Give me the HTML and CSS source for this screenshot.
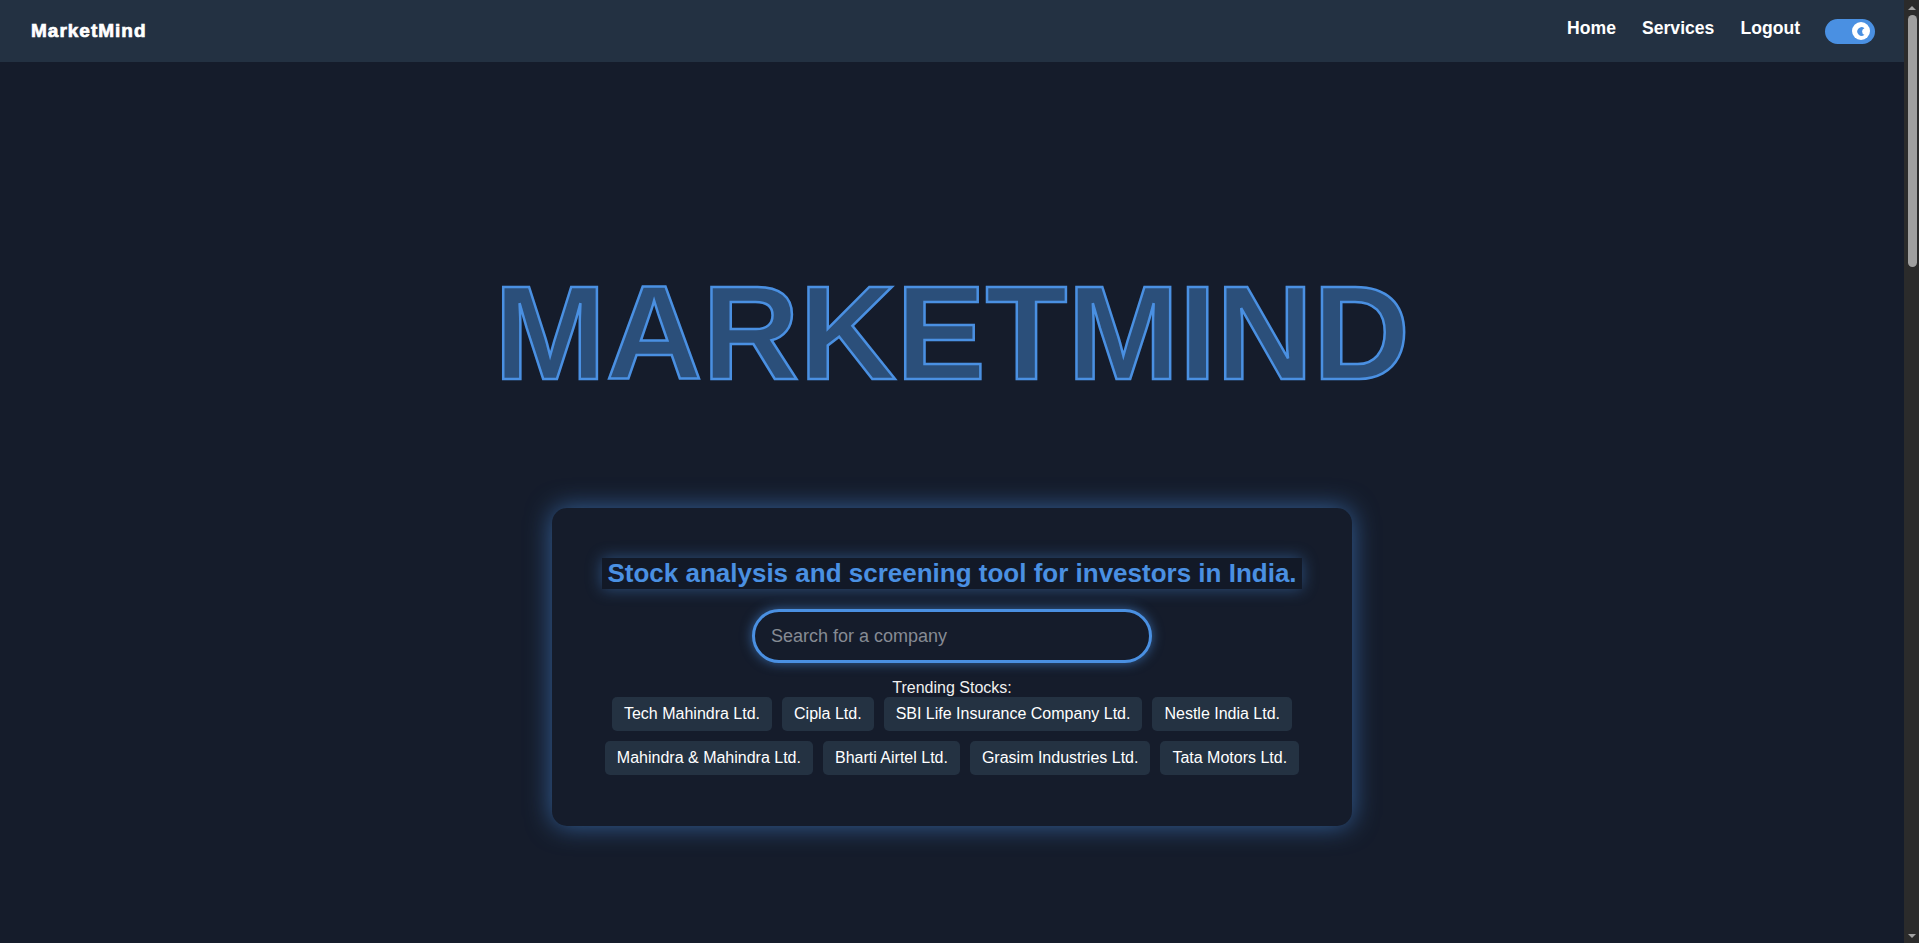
FILE: index.html
```html
<!DOCTYPE html>
<html lang="en">
<head>
<meta charset="utf-8">
<title>MarketMind</title>
<link rel="stylesheet" href="styles.css">
</head>
<body>
<div class="page">
  <header class="topbar">
    <a class="brand" href="#">MarketMind</a>
    <nav class="nav">
      <a class="nav-link" href="#">Home</a>
      <a class="nav-link" href="#">Services</a>
      <a class="nav-link" href="#">Logout</a>
      <span class="switch" role="switch" aria-checked="true">
        <span class="knob">
          <svg class="moon" viewBox="0 0 12 12" width="13" height="13" aria-hidden="true">
            <path d="M8.7 2.9 A4 4 0 1 0 8.7 9.1 A3.3 3.3 0 0 1 8.7 2.9 Z" fill="#4a90e2"/>
          </svg>
        </span>
      </span>
    </nav>
  </header>

  <main class="hero">
    <h1 class="title">MARKETMIND</h1>

    <section class="card">
      <h2 class="tagline"><span class="tagline-text">Stock analysis and screening tool for investors in India.</span></h2>
      <form class="search">
        <input class="search-input" type="text" placeholder="Search for a company">
      </form>
      <p class="trend-label">Trending Stocks:</p>
      <div class="chips">
        <a class="chip" href="#">Tech Mahindra Ltd.</a>
        <a class="chip" href="#">Cipla Ltd.</a>
        <a class="chip" href="#">SBI Life Insurance Company Ltd.</a>
        <a class="chip" href="#">Nestle India Ltd.</a>
        <a class="chip" href="#">Mahindra &amp; Mahindra Ltd.</a>
        <a class="chip" href="#">Bharti Airtel Ltd.</a>
        <a class="chip" href="#">Grasim Industries Ltd.</a>
        <a class="chip" href="#">Tata Motors Ltd.</a>
      </div>
    </section>
  </main>

  <section class="below"></section>
</div>
<div class="scrollbar" aria-hidden="true">
  <span class="sb-arrow sb-up"></span>
  <span class="sb-track"><span class="sb-thumb"></span></span>
  <span class="sb-arrow sb-down"></span>
</div>
</body>
</html>
```

FILE: styles.css
```css
* {
  box-sizing: border-box;
}

html, body {
  margin: 0;
  padding: 0;
  height: 100%;
  overflow: hidden;
}

body {
  background: #151c2b;
  color: #ffffff;
  font-family: "Liberation Sans", Arial, sans-serif;
  display: flex;
}

.page {
  flex: 1;
  min-width: 0;
  height: 100vh;
  overflow: hidden;
  background: #151c2b;
}

a {
  color: inherit;
  text-decoration: none;
}

/* scrollbar rail */
.scrollbar {
  width: 15px;
  height: 100vh;
  background: #2b2b2b;
  display: flex;
  flex-direction: column;
  align-items: center;
}

.sb-arrow {
  width: 15px;
  height: 15px;
  display: flex;
  align-items: center;
  justify-content: center;
}

.sb-up::before,
.sb-down::before {
  content: "";
  width: 0;
  height: 0;
  border-left: 4px solid transparent;
  border-right: 4px solid transparent;
}

.sb-up::before {
  border-bottom: 4px solid #a3a3a3;
}

.sb-down::before {
  border-top: 4px solid #a3a3a3;
}

.sb-track {
  flex: 1;
  width: 15px;
  display: flex;
  justify-content: center;
  padding-left: 1px;
}

.sb-thumb {
  width: 9px;
  height: 252px;
  border-radius: 5px;
  background: #9f9f9f;
}

/* header */
.topbar {
  height: 62px;
  background: #233142;
  display: flex;
  align-items: center;
  justify-content: space-between;
  padding: 0 29px 0 31px;
}

.brand {
  font-size: 19px;
  font-weight: 900;
  letter-spacing: 1px;
  -webkit-text-stroke: 0.7px #ffffff;
  color: #ffffff;
}

.nav {
  display: flex;
  align-items: center;
  gap: 26px;
}

.nav-link {
  font-size: 17.6px;
  font-weight: 700;
  color: #ffffff;
  margin-bottom: 5px;
}

.switch {
  width: 50px;
  height: 25px;
  margin-left: -1px;
  border-radius: 13px;
  background: #4a90e2;
  display: flex;
  align-items: center;
  justify-content: flex-end;
  padding-right: 5px;
}

.knob {
  width: 18px;
  height: 18px;
  border-radius: 50%;
  background: #ffffff;
  display: flex;
  align-items: center;
  justify-content: center;
}

.moon {
  display: block;
}

/* hero */
.hero {
  padding-top: 194px;
  display: flex;
  flex-direction: column;
  align-items: center;
}

.title {
  margin: 0;
  font-size: 134px;
  font-weight: 700;
  line-height: 154px;
  color: #2b4f7a;
  -webkit-text-stroke: 2.5px #4a90e2;
  text-align: center;
}

.card {
  width: 800px;
  margin-top: 98px;
  padding: 50px 40px 51px;
  border-radius: 15px;
  background: #151c2b;
  box-shadow: 0 0 26px rgba(74, 144, 226, 0.6);
  display: flex;
  flex-direction: column;
  align-items: center;
}

.tagline {
  margin: 0;
  font-size: 26px;
  font-weight: 700;
  line-height: 31px;
  text-align: center;
}

.tagline-text {
  display: inline-block;
  padding: 0 5px;
  color: #4a90e2;
  background: #121927;
  box-shadow: 0 0 16px rgba(74, 144, 226, 0.45);
}

.search {
  margin-top: 20px;
}

.search-input {
  display: block;
  width: 400px;
  height: 54px;
  border: 3px solid #4a90e2;
  border-radius: 27px;
  background: #151c2b;
  padding: 0 16px;
  font-family: "Liberation Sans", Arial, sans-serif;
  font-size: 18px;
  color: #ffffff;
  outline: none;
  box-shadow: 0 0 12px rgba(74, 144, 226, 0.6);
}

.search-input::placeholder {
  color: #868b94;
}

.trend-label {
  margin: 16px 0 0;
  font-size: 16px;
  line-height: 18px;
  color: #f0f0f0;
}

.chips {
  display: flex;
  flex-wrap: wrap;
  justify-content: center;
  gap: 10px;
}

.chip {
  background: #243242;
  color: #ffffff;
  font-size: 16px;
  line-height: 18px;
  padding: 8px 12px;
  border-radius: 5px;
}

.below {
  height: 2640px;
}
```
